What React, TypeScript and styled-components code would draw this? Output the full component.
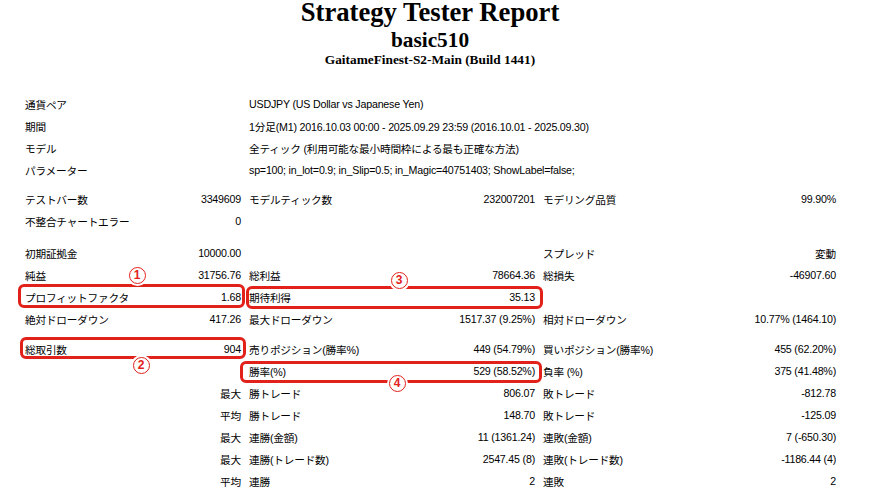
import React from "react";
import styled, { createGlobalStyle } from "styled-components";

const GlobalStyle = createGlobalStyle`
  html, body { margin: 0; padding: 0; background: #ffffff; }
  body { font-family: "Liberation Sans", "Noto Sans CJK JP", sans-serif; color: #000; }
`;

const Page = styled.div`
  position: relative;
  width: 870px;
  height: 496px;
  overflow: hidden;
  background: #fff;
`;

const Header = styled.header`
  width: 860px;
  display: flex;
  flex-direction: column;
  align-items: center;
  font-family: "Liberation Serif", "Times New Roman", serif;
  font-weight: bold;
`;

const Title = styled.div`
  font-size: 26.67px;
  line-height: 24px;
`;

const Subtitle = styled.div`
  font-size: 21.33px;
  line-height: 24px;
  margin-top: 4px;
`;

const Server = styled.div`
  font-size: 13.33px;
  line-height: 16px;
`;

const Table = styled.div`
  display: grid;
  grid-template-columns: 130px 78px 150px 128px 150px 135px;
  column-gap: 8px;
  margin-top: 25px;
  padding-left: 25px;
  font-size: 10.67px;
  letter-spacing: -0.2px;
`;

const Cell = styled.div<{ $span?: number; $right?: boolean }>`
  grid-column: span ${(p) => p.$span ?? 1};
  height: 22px;
  display: flex;
  align-items: center;
  justify-content: ${(p) => (p.$right ? "flex-end" : "flex-start")};
  white-space: nowrap;
`;

const Spacer = styled.div<{ $h: number }>`
  grid-column: 1 / -1;
  height: ${(p) => p.$h}px;
`;

const Highlight = styled.div<{ $x: number; $y: number; $w: number; $h: number }>`
  position: absolute;
  left: ${(p) => p.$x}px;
  top: ${(p) => p.$y}px;
  width: ${(p) => p.$w}px;
  height: ${(p) => p.$h}px;
  box-sizing: border-box;
  border: 3px solid #e2211b;
  border-radius: 6px;
`;

const Badge = styled.div<{ $x: number; $y: number }>`
  position: absolute;
  left: ${(p) => p.$x - 8.5}px;
  top: ${(p) => p.$y - 8.5}px;
  width: 17px;
  height: 17px;
  box-sizing: border-box;
  border: 1.6px solid #e2211b;
  border-radius: 50%;
  background: #fff;
  box-shadow: 0 0 0 2px #fff;
  color: #e2211b;
  font-family: "Liberation Sans", sans-serif;
  font-weight: bold;
  font-size: 12px;
  line-height: 13px;
  display: flex;
  align-items: center;
  justify-content: center;
`;

type C = { t?: string; s?: number; r?: boolean };
type Row = C[] | { spacer: number };

const rows: Row[] = [
  [{ t: "通貨ペア", s: 2 }, { t: "USDJPY (US Dollar vs Japanese Yen)", s: 4 }],
  [{ t: "期間", s: 2 }, { t: "1分足(M1) 2016.10.03 00:00 - 2025.09.29 23:59 (2016.10.01 - 2025.09.30)", s: 4 }],
  [{ t: "モデル", s: 2 }, { t: "全ティック (利用可能な最小時間枠による最も正確な方法)", s: 4 }],
  [{ t: "パラメーター", s: 2 }, { t: "sp=100; in_lot=0.9; in_Slip=0.5; in_Magic=40751403; ShowLabel=false;", s: 4 }],
  { spacer: 7 },
  [{ t: "テストバー数" }, { t: "3349609", r: true }, { t: "モデルティック数" }, { t: "232007201", r: true }, { t: "モデリング品質" }, { t: "99.90%", r: true }],
  [{ t: "不整合チャートエラー" }, { t: "0", r: true }, { s: 4 }],
  { spacer: 10 },
  [{ t: "初期証拠金" }, { t: "10000.00", r: true }, {}, {}, { t: "スプレッド" }, { t: "変動", r: true }],
  [{ t: "純益" }, { t: "31756.76", r: true }, { t: "総利益" }, { t: "78664.36", r: true }, { t: "総損失" }, { t: "-46907.60", r: true }],
  [{ t: "プロフィットファクタ" }, { t: "1.68", r: true }, { t: "期待利得" }, { t: "35.13", r: true }, {}, {}],
  [{ t: "絶対ドローダウン" }, { t: "417.26", r: true }, { t: "最大ドローダウン" }, { t: "1517.37 (9.25%)", r: true }, { t: "相対ドローダウン" }, { t: "10.77% (1464.10)", r: true }],
  { spacer: 8 },
  [{ t: "総取引数" }, { t: "904", r: true }, { t: "売りポジション(勝率%)" }, { t: "449 (54.79%)", r: true }, { t: "買いポジション(勝率%)" }, { t: "455 (62.20%)", r: true }],
  [{}, {}, { t: "勝率(%)" }, { t: "529 (58.52%)", r: true }, { t: "負率 (%)" }, { t: "375 (41.48%)", r: true }],
  [{}, { t: "最大", r: true }, { t: "勝トレード" }, { t: "806.07", r: true }, { t: "敗トレード" }, { t: "-812.78", r: true }],
  [{}, { t: "平均", r: true }, { t: "勝トレード" }, { t: "148.70", r: true }, { t: "敗トレード" }, { t: "-125.09", r: true }],
  [{}, { t: "最大", r: true }, { t: "連勝(金額)" }, { t: "11 (1361.24)", r: true }, { t: "連敗(金額)" }, { t: "7 (-650.30)", r: true }],
  [{}, { t: "最大", r: true }, { t: "連勝(トレード数)" }, { t: "2547.45 (8)", r: true }, { t: "連敗(トレード数)" }, { t: "-1186.44 (4)", r: true }],
  [{}, { t: "平均", r: true }, { t: "連勝" }, { t: "2", r: true }, { t: "連敗" }, { t: "2", r: true }],
];

const boxes = [
  { x: 18, y: 284, w: 227, h: 24 },
  { x: 246, y: 286, w: 297, h: 23 },
  { x: 20, y: 337, w: 226, h: 22 },
  { x: 240, y: 361, w: 302, h: 22 },
];

const badges = [
  { n: "1", x: 137, y: 275 },
  { n: "3", x: 399, y: 280 },
  { n: "2", x: 141, y: 365 },
  { n: "4", x: 397, y: 383 },
];

export default function App() {
  return (
    <Page>
      <GlobalStyle />
      <Header>
        <Title>Strategy Tester Report</Title>
        <Subtitle>basic510</Subtitle>
        <Server>GaitameFinest-S2-Main (Build 1441)</Server>
      </Header>
      <Table>
        {rows.map((row, i) =>
          "spacer" in row ? (
            <Spacer key={i} $h={row.spacer} />
          ) : (
            row.map((c, j) => (
              <Cell key={`${i}-${j}`} $span={c.s} $right={c.r}>
                {c.t}
              </Cell>
            ))
          )
        )}
      </Table>
      {boxes.map((b, i) => (
        <Highlight key={i} $x={b.x} $y={b.y} $w={b.w} $h={b.h} />
      ))}
      {badges.map((b) => (
        <Badge key={b.n} $x={b.x} $y={b.y}>
          {b.n}
        </Badge>
      ))}
    </Page>
  );
}
